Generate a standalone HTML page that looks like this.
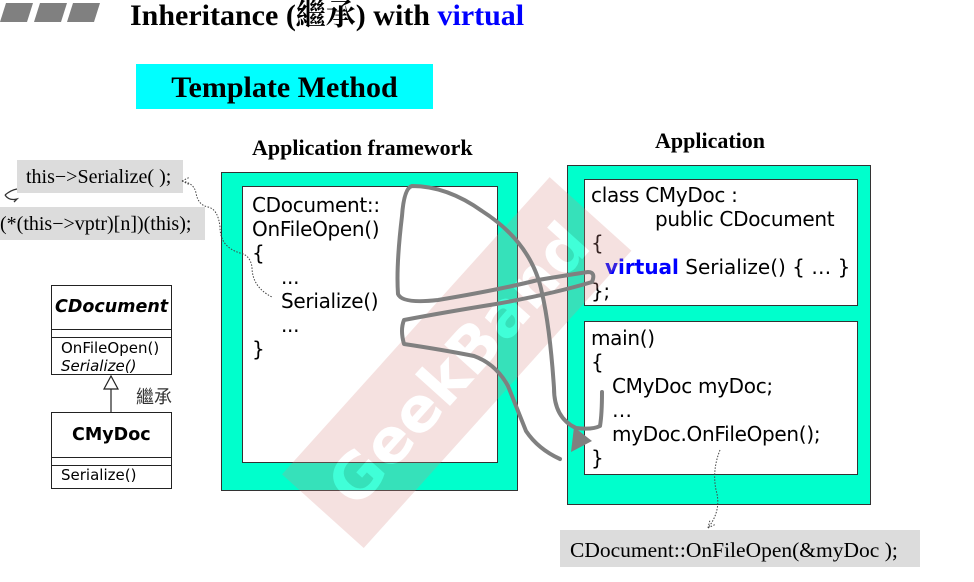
<!DOCTYPE html>
<html><head><meta charset="utf-8"><style>
body{margin:0;width:974px;height:582px;background:#fff;position:relative;overflow:hidden;font-family:"DejaVu Sans",sans-serif}
.a{position:absolute}
.ser{font-family:"Liberation Serif","Noto Serif CJK SC",serif}
.code{font-family:"DejaVu Sans",sans-serif;font-size:20px;line-height:24px;color:#000;white-space:pre;letter-spacing:-0.3px}
.box{position:absolute;border:1.5px solid #333;box-sizing:border-box}
</style></head><body>
<svg class="a" style="left:0;top:0" width="974" height="582">
<polygon points="6,3 33,3 27,22 0,22" fill="#808080"/>
<polygon points="40,3 67,3 61,22 34,22" fill="#808080"/>
<polygon points="73,3 100,3 94,22 67,22" fill="#808080"/>
</svg>
<div class="a ser" style="left:130px;top:-2px;font-size:30px;font-weight:bold;line-height:36px">Inheritance (繼承) with <span style="color:#0000ff">virtual</span></div>
<div class="a ser" style="left:136px;top:64px;width:297px;height:45px;background:#00ffff;font-size:30px;font-weight:bold;text-align:center;line-height:48px">Template Method</div>
<div class="a ser" style="left:252px;top:135px;font-size:22px;font-weight:bold">Application framework</div>
<div class="a ser" style="left:655px;top:128px;font-size:22px;font-weight:bold">Application</div>

<div class="box" style="left:221px;top:172px;width:297px;height:319px;background:#00ffcc"></div>
<div class="box" style="left:242px;top:186px;width:256px;height:277px;background:#fff"></div>
<div class="a code" style="left:252px;top:193px">CDocument::
OnFileOpen()
{</div>
<div class="a code" style="left:281px;top:265px">...
Serialize()
...</div>
<div class="a code" style="left:252px;top:337px">}</div>

<div class="box" style="left:567px;top:165px;width:304px;height:340px;background:#00ffcc"></div>
<div class="box" style="left:584px;top:179px;width:274px;height:127px;background:#fff"></div>
<div class="box" style="left:584px;top:321px;width:274px;height:154px;background:#fff"></div>
<div class="a code" style="left:591px;top:183px">class CMyDoc :</div>
<div class="a code" style="left:655px;top:207px">public CDocument</div>
<div class="a code" style="left:591px;top:231px">{</div>
<div class="a code" style="left:605px;top:255px;letter-spacing:0"><b style="color:#0000ff">virtual</b> Serialize() { … }</div>
<div class="a code" style="left:591px;top:279px">};</div>
<div class="a code" style="left:591px;top:326px">main()
{</div>
<div class="a code" style="left:612px;top:374px">CMyDoc myDoc;
…
myDoc.OnFileOpen();</div>
<div class="a code" style="left:591px;top:446px">}</div>

<div class="a ser" style="left:560px;top:530px;width:360px;height:37px;background:#dcdcdc;font-size:21.5px;line-height:40px;padding-left:10px;box-sizing:border-box;white-space:nowrap">CDocument::OnFileOpen(&amp;myDoc );</div>
<div class="a ser" style="left:17px;top:160px;width:166px;height:33px;background:#dcdcdc;font-size:20px;line-height:34px;padding-left:9px;box-sizing:border-box;white-space:nowrap">this−&gt;Serialize( );</div>
<div class="a ser" style="left:0;top:207px;width:205px;height:33px;background:#dcdcdc;font-size:20px;line-height:34px;box-sizing:border-box;white-space:nowrap">(*(this−&gt;vptr)[n])(this);</div>

<div class="box" style="left:51px;top:285px;width:121px;height:90px;background:#fff;border-color:#222"></div>
<div class="a" style="left:51px;top:329px;width:121px;height:1px;background:#222"></div>
<div class="a" style="left:51px;top:337px;width:121px;height:1px;background:#222"></div>
<div class="a" style="left:55px;top:297px;font-size:17.5px;font-weight:bold;font-style:italic">CDocument</div>
<div class="a" style="left:61px;top:339px;font-size:15px;line-height:18px">OnFileOpen()<br><i>Serialize()</i></div>
<div class="box" style="left:51px;top:412px;width:121px;height:77px;background:#fff;border-color:#222"></div>
<div class="a" style="left:51px;top:457px;width:121px;height:1px;background:#222"></div>
<div class="a" style="left:51px;top:465px;width:121px;height:1px;background:#222"></div>
<div class="a" style="left:72px;top:425px;font-size:17.5px;font-weight:bold">CMyDoc</div>
<div class="a" style="left:61px;top:466px;font-size:15px">Serialize()</div>
<div class="a" style="left:136px;top:383px;font-size:18px;color:#333;font-family:'Noto Sans CJK TC',sans-serif">繼承</div>

<svg class="a" style="left:0;top:0" width="974" height="582">
<polygon points="111,376 104,389 118,389" fill="#fff" stroke="#222" stroke-width="1.2"/>
<line x1="111" y1="389" x2="111" y2="412" stroke="#222" stroke-width="1.2"/>
<path d="M5,195 q6,-5 12,-6 M5,195 q4,6 12,4 l-3,3" stroke="#333" fill="none" stroke-width="1.3"/>
<path d="M182,181 l8,-4 M182,181 l8,4 M182,181 q12,2 14,12 q2,12 12,14 q10,2 12,20 q0,20 20,26 q10,2 12,14 q0,20 20,30" stroke="#444" fill="none" stroke-dasharray="1.5,1.5" stroke-width="1"/>
<path d="M720,450 q-8,20 -4,40 q6,20 -8,38 M708,528 l2,-8 M708,528 l8,-4" stroke="#444" fill="none" stroke-dasharray="1.5,1.5" stroke-width="1"/>
<g opacity="0.25" transform="translate(450,370) rotate(-48)">
<rect x="-190" y="-55" width="400" height="110" fill="#d88a86"/>
<text x="10" y="24" font-family="DejaVu Sans" font-weight="bold" font-size="62" fill="#fff" text-anchor="middle">GeekBand</text>
</g>
<path d="M602,392 q0,22 -2,34 q-8,4 -24,2 q-22,-10 -22,-40 q-4,-60 -12,-95 q-10,-50 -60,-82 q-35,-25 -70,-25 q-8,2 -10,30 q-6,50 -4,78 q4,10 40,6 q60,-10 100,-20 q30,-5 50,-8 q8,0 4,10 q-40,12 -96,22 q-50,8 -92,16 q-4,10 0,24 q40,6 70,12 q22,8 34,30 q10,25 18,45 q12,18 34,28" stroke="#808080" stroke-width="4" fill="none" stroke-linejoin="round" stroke-linecap="round"/>
<polygon points="592,441 574,427 571,452" fill="#808080"/>
</svg>
</body></html>
